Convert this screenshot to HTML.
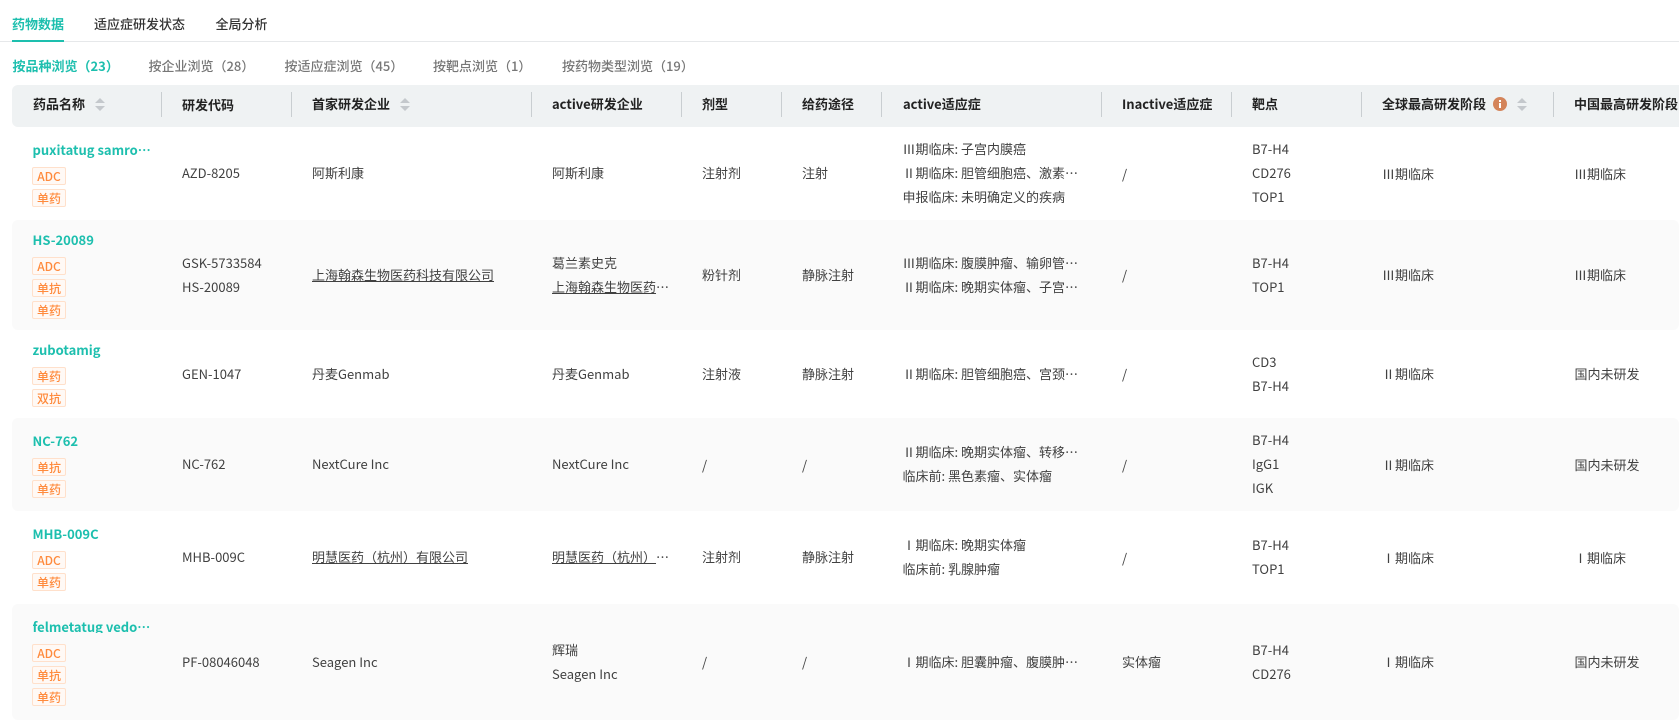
<!DOCTYPE html>
<html lang="zh-CN"><head><meta charset="utf-8"><title>药物数据</title>
<style>
html,body{margin:0;padding:0;background:#fff}
body{width:1679px;height:722px;overflow:hidden;position:relative;font-family:"Noto Sans CJK SC","Liberation Sans",sans-serif;font-size:13px;color:#414141}
.a{position:absolute;white-space:nowrap;line-height:20px;height:20px}
.tab{font-weight:500;color:#333;top:14px}
.sub{color:#777;font-weight:500;top:56px}
.on{color:#1dbfae;font-weight:700}
.h{font-weight:700;color:#222;top:94px}
.s{position:absolute;top:92px;width:1px;height:25px;background:#c9ced1}
.a.n{font-weight:700;color:#1dbfae;left:32.5px;height:18px;overflow:hidden}
.g{position:absolute;left:32px;width:32px;height:16px;border:1px solid #ffe0cb;border-radius:2px;background:#fff9f5;color:#ff8a3c;font-size:12px;font-weight:500;line-height:18px;text-align:center;overflow:hidden}
.r{position:absolute;left:12px;right:0;background:#fafafa;border-radius:6px}
.u{text-decoration:underline}
.st{position:absolute;width:10px;height:13px}
</style></head><body>
<div class="a tab on" style="left:12px">药物数据</div>
<div class="a tab" style="left:94px">适应症研发状态</div>
<div class="a tab" style="left:215.5px">全局分析</div>
<div style="position:absolute;left:0;right:0;top:41px;height:1px;background:#e6e8ea"></div>
<div style="position:absolute;left:12px;top:40px;width:52px;height:2px;background:#1dbfae"></div>
<div class="a sub on" style="left:12.5px">按品种浏览（23）</div>
<div class="a sub" style="left:148.5px">按企业浏览（28）</div>
<div class="a sub" style="left:284.5px">按适应症浏览（45）</div>
<div class="a sub" style="left:433px">按靶点浏览（1）</div>
<div class="a sub" style="left:562px">按药物类型浏览（19）</div>

<div style="position:absolute;left:12px;right:0;top:85px;height:42px;background:#eff2f3;border-radius:6px 0 0 6px"></div>
<div class="r" style="top:220px;height:110px"></div>
<div class="r" style="top:418px;height:93px"></div>
<div class="r" style="top:604px;height:116px"></div>

<i class="s" style="left:161px"></i><i class="s" style="left:291px"></i><i class="s" style="left:531px"></i><i class="s" style="left:681px"></i><i class="s" style="left:781px"></i><i class="s" style="left:881px"></i><i class="s" style="left:1101px"></i><i class="s" style="left:1231px"></i><i class="s" style="left:1361px"></i><i class="s" style="left:1553px"></i>
<div class="a h" style="left:33px">药品名称</div>
<svg class="st" style="left:95px;top:98px" viewBox="0 0 10 13"><path d="M5 0L10 5H0ZM0 8H10L5 13Z" fill="#c4c8cc"/></svg>
<div class="a h" style="left:182px;top:95px">研发代码</div>
<div class="a h" style="left:312px">首家研发企业</div>
<svg class="st" style="left:400px;top:98px" viewBox="0 0 10 13"><path d="M5 0L10 5H0ZM0 8H10L5 13Z" fill="#c4c8cc"/></svg>
<div class="a h" style="left:552px">active研发企业</div>
<div class="a h" style="left:702px">剂型</div>
<div class="a h" style="left:802px">给药途径</div>
<div class="a h" style="left:903px">active适应症</div>
<div class="a h" style="left:1122px">Inactive适应症</div>
<div class="a h" style="left:1252px">靶点</div>
<div class="a h" style="left:1382px">全球最高研发阶段</div>
<svg style="position:absolute;left:1493px;top:97px" width="14" height="14" viewBox="0 0 14 14"><circle cx="7" cy="7" r="7" fill="#d4845a"/><path d="M6 6h2v5H6zM6 3h2v2H6z" fill="#fff"/></svg>
<svg class="st" style="left:1517px;top:98px" viewBox="0 0 10 13"><path d="M5 0L10 5H0ZM0 8H10L5 13Z" fill="#c4c8cc"/></svg>
<div class="a h" style="left:1574px">中国最高研发阶段</div>

<!-- row 1 -->
<div class="a n" style="top:140px">puxitatug samro…</div>
<div class="g" style="top:167px">ADC</div><div class="g" style="top:189px">单药</div>
<div class="a" style="left:182px;top:163px">AZD-8205</div>
<div class="a" style="left:312px;top:163px">阿斯利康</div>
<div class="a" style="left:552px;top:163px">阿斯利康</div>
<div class="a" style="left:702px;top:163px">注射剂</div>
<div class="a" style="left:802px;top:163px">注射</div>
<div class="a" style="left:902.5px;top:139px">Ⅲ期临床: 子宫内膜癌</div>
<div class="a" style="left:902.5px;top:163px">Ⅱ期临床: 胆管细胞癌、激素…</div>
<div class="a" style="left:902.5px;top:187px">申报临床: 未明确定义的疾病</div>
<div class="a" style="left:1122px;top:164px">/</div>
<div class="a" style="left:1252px;top:139px">B7-H4</div>
<div class="a" style="left:1252px;top:163px">CD276</div>
<div class="a" style="left:1252px;top:187px">TOP1</div>
<div class="a" style="left:1382px;top:164px">Ⅲ期临床</div>
<div class="a" style="left:1574px;top:164px">Ⅲ期临床</div>

<!-- row 2 -->
<div class="a n" style="top:230px">HS-20089</div>
<div class="g" style="top:257px">ADC</div><div class="g" style="top:279px">单抗</div><div class="g" style="top:301px">单药</div>
<div class="a" style="left:182px;top:253px">GSK-5733584</div>
<div class="a" style="left:182px;top:277px">HS-20089</div>
<div class="a u" style="left:312px;top:265px">上海翰森生物医药科技有限公司</div>
<div class="a" style="left:552px;top:253px">葛兰素史克</div>
<div class="a" style="left:552px;top:277px"><span class="u">上海翰森生物医药</span>…</div>
<div class="a" style="left:702px;top:265px">粉针剂</div>
<div class="a" style="left:802px;top:265px">静脉注射</div>
<div class="a" style="left:902.5px;top:253px">Ⅲ期临床: 腹膜肿瘤、输卵管…</div>
<div class="a" style="left:902.5px;top:277px">Ⅱ期临床: 晚期实体瘤、子宫…</div>
<div class="a" style="left:1122px;top:265px">/</div>
<div class="a" style="left:1252px;top:253px">B7-H4</div>
<div class="a" style="left:1252px;top:277px">TOP1</div>
<div class="a" style="left:1382px;top:265px">Ⅲ期临床</div>
<div class="a" style="left:1574px;top:265px">Ⅲ期临床</div>

<!-- row 3 -->
<div class="a n" style="top:340px">zubotamig</div>
<div class="g" style="top:367px">单药</div><div class="g" style="top:389px">双抗</div>
<div class="a" style="left:182px;top:364px">GEN-1047</div>
<div class="a" style="left:312px;top:364px">丹麦Genmab</div>
<div class="a" style="left:552px;top:364px">丹麦Genmab</div>
<div class="a" style="left:702px;top:364px">注射液</div>
<div class="a" style="left:802px;top:364px">静脉注射</div>
<div class="a" style="left:902.5px;top:364px">Ⅱ期临床: 胆管细胞癌、宫颈…</div>
<div class="a" style="left:1122px;top:364px">/</div>
<div class="a" style="left:1252px;top:352px">CD3</div>
<div class="a" style="left:1252px;top:376px">B7-H4</div>
<div class="a" style="left:1382px;top:364px">Ⅱ期临床</div>
<div class="a" style="left:1574.5px;top:364px">国内未研发</div>

<!-- row 4 -->
<div class="a n" style="top:431px">NC-762</div>
<div class="g" style="top:458px">单抗</div><div class="g" style="top:480px">单药</div>
<div class="a" style="left:182px;top:454px">NC-762</div>
<div class="a" style="left:312px;top:454px">NextCure Inc</div>
<div class="a" style="left:552px;top:454px">NextCure Inc</div>
<div class="a" style="left:702px;top:455px">/</div>
<div class="a" style="left:802px;top:455px">/</div>
<div class="a" style="left:902.5px;top:442px">Ⅱ期临床: 晚期实体瘤、转移…</div>
<div class="a" style="left:902.5px;top:466px">临床前: 黑色素瘤、实体瘤</div>
<div class="a" style="left:1122px;top:455px">/</div>
<div class="a" style="left:1252px;top:430px">B7-H4</div>
<div class="a" style="left:1252px;top:454px">IgG1</div>
<div class="a" style="left:1252px;top:478px">IGK</div>
<div class="a" style="left:1382px;top:455px">Ⅱ期临床</div>
<div class="a" style="left:1574.5px;top:455px">国内未研发</div>

<!-- row 5 -->
<div class="a n" style="top:524px">MHB-009C</div>
<div class="g" style="top:551px">ADC</div><div class="g" style="top:573px">单药</div>
<div class="a" style="left:182px;top:547px">MHB-009C</div>
<div class="a u" style="left:312px;top:547px">明慧医药（杭州）有限公司</div>
<div class="a" style="left:552px;top:547px"><span class="u">明慧医药（杭州）</span>…</div>
<div class="a" style="left:702px;top:547px">注射剂</div>
<div class="a" style="left:802px;top:547px">静脉注射</div>
<div class="a" style="left:902.5px;top:535px">Ⅰ期临床: 晚期实体瘤</div>
<div class="a" style="left:902.5px;top:559px">临床前: 乳腺肿瘤</div>
<div class="a" style="left:1122px;top:548px">/</div>
<div class="a" style="left:1252px;top:535px">B7-H4</div>
<div class="a" style="left:1252px;top:559px">TOP1</div>
<div class="a" style="left:1382px;top:548px">Ⅰ期临床</div>
<div class="a" style="left:1574px;top:548px">Ⅰ期临床</div>

<!-- row 6 -->
<div class="a n" style="top:617px;height:16px">felmetatug vedo…</div>
<div class="g" style="top:644px">ADC</div><div class="g" style="top:666px">单抗</div><div class="g" style="top:688px">单药</div>
<div class="a" style="left:182px;top:652px">PF-08046048</div>
<div class="a" style="left:312px;top:652px">Seagen Inc</div>
<div class="a" style="left:552px;top:640px">辉瑞</div>
<div class="a" style="left:552px;top:664px">Seagen Inc</div>
<div class="a" style="left:702px;top:652px">/</div>
<div class="a" style="left:802px;top:652px">/</div>
<div class="a" style="left:902.5px;top:652px">Ⅰ期临床: 胆囊肿瘤、腹膜肿…</div>
<div class="a" style="left:1122px;top:652px">实体瘤</div>
<div class="a" style="left:1252px;top:640px">B7-H4</div>
<div class="a" style="left:1252px;top:664px">CD276</div>
<div class="a" style="left:1382px;top:652px">Ⅰ期临床</div>
<div class="a" style="left:1574.5px;top:652px">国内未研发</div>
</body></html>
